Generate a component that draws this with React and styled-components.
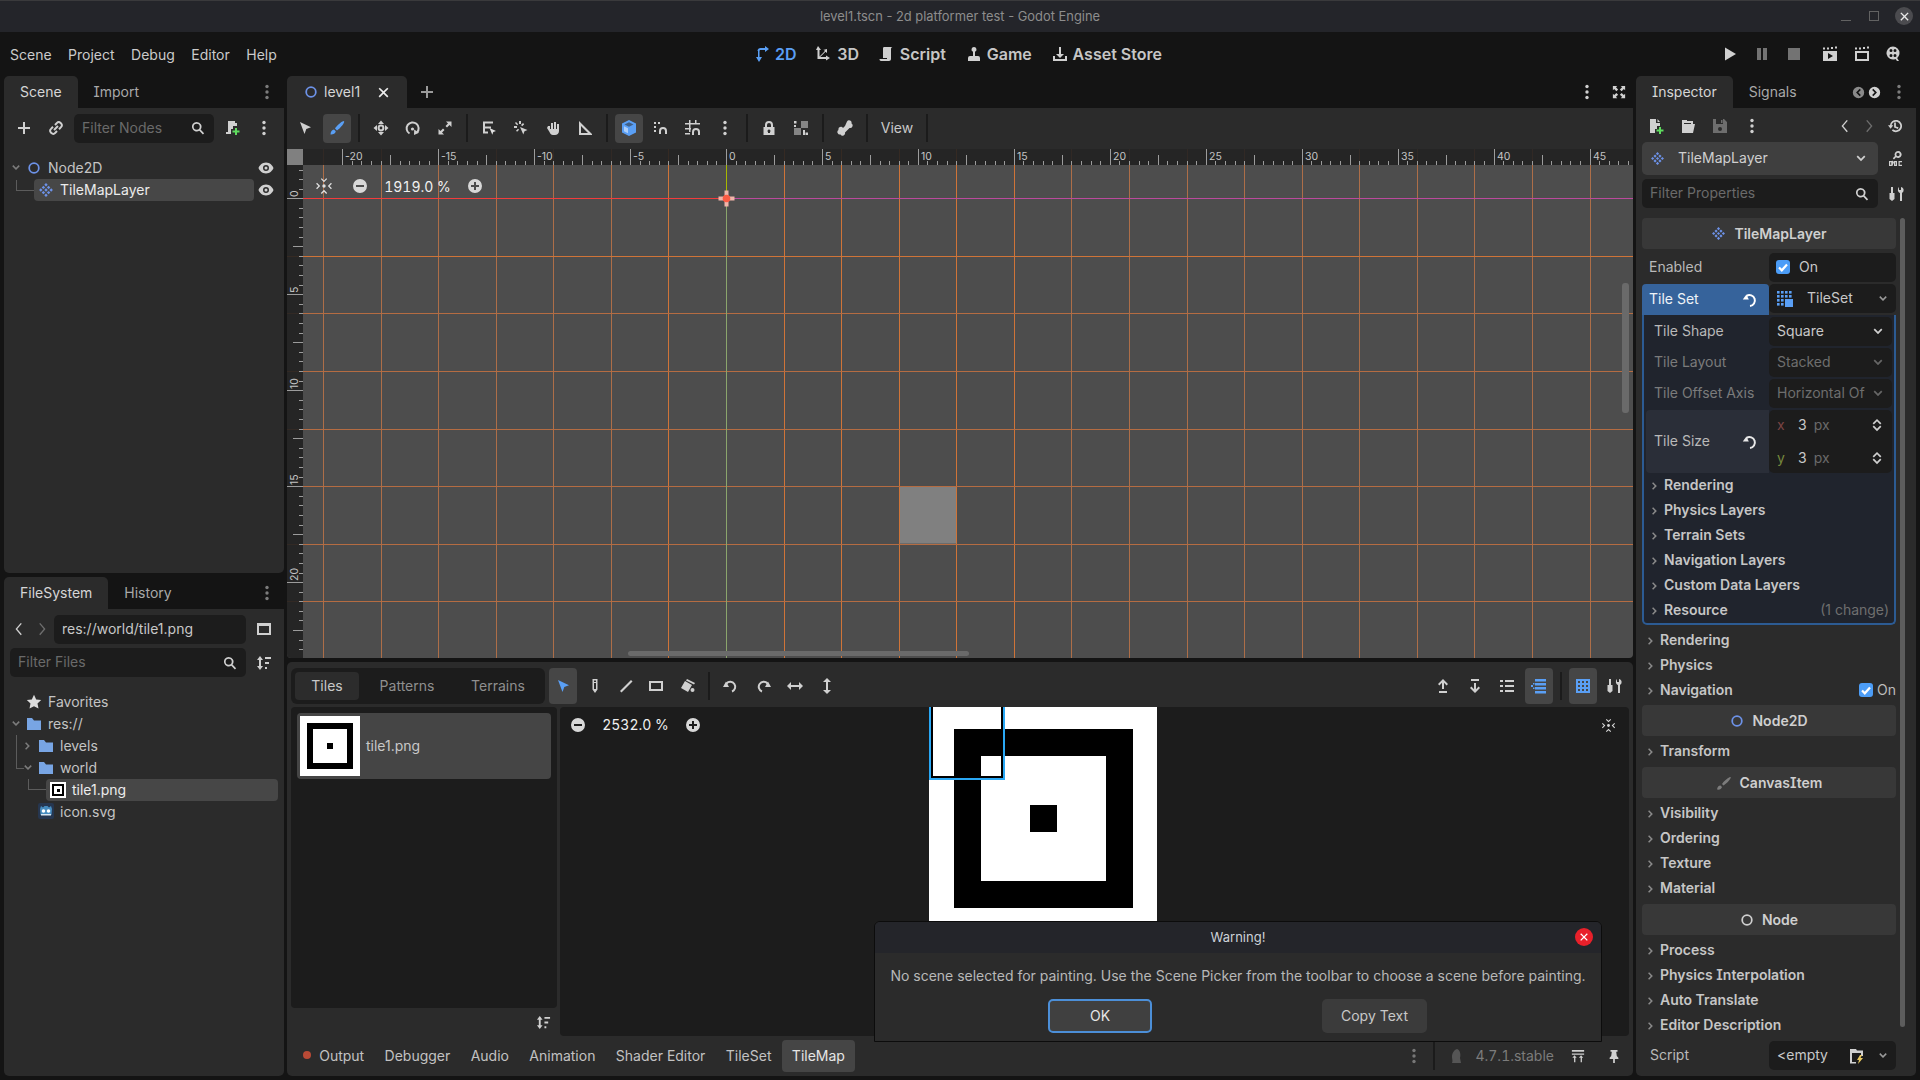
import React from 'react'
import styled, { createGlobalStyle } from 'styled-components'

const BLUE = '#5a9ff5'

const GlobalStyle = createGlobalStyle`
  html, body { margin: 0; padding: 0; background: #141414; overflow: hidden; }
  body {
    font-family: Inter, "Noto Sans", "Liberation Sans", sans-serif;
    font-size: 14px;
    font-feature-settings: "cv08", "calt";
    color: #cfcfcf;
  }
  * { box-sizing: border-box; }
`

const ring = (r = 5.5) => <circle cx="8" cy="8" r={r} fill="none" stroke="currentColor" strokeWidth="2" />

const diamond = (() => {
  const cells = []
  for (let i = -1; i <= 1; i++) {
    for (let j = -1; j <= 1; j++) {
      const x = 8 + (i - j) * 2.6
      const y = 8 + (i + j) * 2.6
      cells.push(<path key={`${i}${j}`} d={`M${x} ${y - 1.7}l1.7 1.7-1.7 1.7-1.7-1.7z`} />)
    }
  }
  return cells
})()

const ICONS = {
  plus: <path d="M7 2h2v5h5v2H9v5H7V9H2V7h5z" />,
  minusCircle: <path fillRule="evenodd" d="M8 1a7 7 0 1 1 0 14A7 7 0 0 1 8 1zM4 7v2h8V7z" />,
  plusCircle: <path fillRule="evenodd" d="M8 1a7 7 0 1 1 0 14A7 7 0 0 1 8 1zM7 4v3H4v2h3v3h2V9h3V7H9V4z" />,
  circleLeft: <path fillRule="evenodd" d="M8 1a7 7 0 1 1 0 14A7 7 0 0 1 8 1zm1.500 2.500L5 8l4.500 4.500 1.400-1.400L7.800 8l3.100-3.100z" />,
  circleRight: <path fillRule="evenodd" d="M8 1a7 7 0 1 1 0 14A7 7 0 0 1 8 1zM6.500 3.500L5.100 4.900 8.200 8l-3.100 3.100 1.400 1.400L11 8z" />,
  link: (
    <g fill="none" stroke="currentColor" strokeWidth="2">
      <path d="M7 5l2-2.2a2.3 2.3 0 0 1 3.4 0l.8.8a2.3 2.3 0 0 1 0 3.3L11 9.2" />
      <path d="M9 11l-2 2.2a2.3 2.3 0 0 1-3.4 0l-.8-.8a2.3 2.3 0 0 1 0-3.3L5 6.8" />
      <path d="M6 10l4-4" />
    </g>
  ),
  search: <path fillRule="evenodd" d="M6.5 1a5.5 5.5 0 0 1 4.4 8.8l4.1 4.1-1.4 1.4-4.1-4.1A5.5 5.5 0 1 1 6.5 1zm0 2a3.5 3.5 0 1 0 0 7 3.5 3.5 0 0 0 0-7z" />,
  dots: (
    <g>
      <circle cx="8" cy="2.5" r="1.7" />
      <circle cx="8" cy="8" r="1.7" />
      <circle cx="8" cy="13.5" r="1.7" />
    </g>
  ),
  addScript: (
    <g>
      <path d="M4 1h7v2h2v3H9v3H7v5H2v-2h2z" />
      <path fill="#5fdc5f" d="M11 8h2v2.5h2.5v2H13V15h-2v-2.5H8.5v-2H11z" />
    </g>
  ),
  arrowDown: <path d="M3 5.5l1.4-1.4L8 7.7l3.6-3.6L13 5.5l-5 5z" />,
  arrowRight: <path d="M5.5 3l5 5-5 5-1.4-1.4L7.7 8 4.1 4.4z" />,
  eye: <path fillRule="evenodd" d="M8 2.5c4 0 6.5 3 7.5 5.5-1 2.500-3.500 5.500-7.500 5.500S1.500 10.500.5 8c1-2.500 3.500-5.500 7.500-5.500zM8 5a3 3 0 1 0 0 6 3 3 0 0 0 0-6zm0 1.500a1.500 1.500 0 1 1 0 3 1.500 1.500 0 0 1 0-3z" />,
  node: <>{ring()}</>,
  tilemap: <g>{diamond}</g>,
  select: <path d="M3 2l11 5.200-4.700 1.800L7.500 14z" />,
  brush: <path d="M14.500 1c-2.500.8-6.500 4.500-8.500 7.500l2 2c3-2 6.500-6 7.300-8.700zM5 9.500c-2 .2-3.500 2-3.500 5 2.500.2 4.800-.8 5.300-3.200z" />,
  move: (
    <g>
      <path d="M8 .5L11 4H5zM8 15.500L5 12h6zM.5 8L4 5v6zM15.500 8L12 11V5z" />
      {ring(2.4)}
    </g>
  ),
  rotate: (
    <g>
      <path fill="none" stroke="currentColor" strokeWidth="2" d="M4.500 13.500A6 6 0 1 1 12 12.500" />
      <path d="M9 15l.2-5.500 4.800 3.300z" />
      <circle cx="7.500" cy="9" r="1.600" />
    </g>
  ),
  scale: <path d="M9 1.500h5.500V7l-2-2L10 7.500 8.500 6 11 3.500zM7 14.500H1.500V9l2 2L6 8.500 7.500 10 5 12.500z" />,
  listSelect: (
    <g>
      <path d="M2 1.500h10v2H4v3h6v2H4v3h3v2H2z" />
      <path fill="#e0e0e0" d="M8.500 8l6.500 3-2.700 1-1 2.800z" />
    </g>
  ),
  smartSelect: (
    <g>
      <path d="M6 1h2v3H6zM1 6h3v2H1zM3 2l2.200 2.200-1.100 1.100L2 3zM3 10.700l2-2 1.100 1.100-2 2zM10 3l1.200 1.200-2 2L8 5z" />
      <path d="M7 7l7.500 3-3 1.200-1.200 3.300z" />
    </g>
  ),
  hand: <path d="M3 6h2v3h1V3h2v6h1V2h2v7h1V4h2v7c0 2.500-2 4-4 4H8c-2 0-3-1.500-3.500-3L2 8z" />,
  ruler: <path fillRule="evenodd" d="M2 1l13 13v1H2zm2 5v7h7z" />,
  box3d: (
    <g>
      <path fill="#5a9ff5" d="M8 0l7 3.500v9L8 16l-7-3.500v-9z" />
      <path fill="#2b2b2b" d="M8 2.200L12.500 4.500 8 6.800 3.500 4.500z" opacity=".55" />
      <path fill="#ffffff" opacity=".5" d="M3 6.200l4 2v5l-4-2z" />
    </g>
  ),
  snap: (
    <g>
      <path d="M1 2h2v2H1zM5 2h2v2H5zM1 6h2v2H1zM1 10h2v2H1z" />
      <path fill="none" stroke="currentColor" strokeWidth="2" d="M7 14v-3a3 3 0 0 1 6 0v3" />
    </g>
  ),
  gridSnap: (
    <g>
      <path d="M4 0h1.500v12H4zM10 0h1.500v4H10zM0 3h15v1.500H0zM0 8h6v1.500H0zM0 13h5v1.500H0z" />
      <path fill="none" stroke="currentColor" strokeWidth="2" d="M8 15v-3a3 3 0 0 1 6 0v3" />
    </g>
  ),
  lock: <path fillRule="evenodd" d="M8 1a4 4 0 0 1 4 4v2h1.500v8h-11V7H4V5a4 4 0 0 1 4-4zm0 2a2 2 0 0 0-2 2v2h4V5a2 2 0 0 0-2-2zm0 6.500a1.500 1.500 0 0 0-1 2.600V13h2v-.9a1.500 1.500 0 0 0-1-2.600z" />,
  group: (
    <g>
      <path opacity=".55" d="M8 1h7v7H8zM1 8h7v7H1z" />
      <path d="M1 1h2.500v2.500H1zM12.500 12.500H15V15h-2.500zM1 5h2v2H1zM10 10h2v5h-2z" />
    </g>
  ),
  bone: <path d="M10 1.500a2.500 2.500 0 0 1 4.500 2 2.500 2.500 0 0 1-2 4.500L8 12.500a2.500 2.500 0 0 1-4.500 2 2.500 2.500 0 0 1-2-4.500 2.500 2.500 0 0 1 4.500-2L8 6z" />,
  fullscreen: <path d="M1 1h5L4.500 2.500 7 5 5 7 2.500 4.500 1 6zM15 1v5l-1.500-1.500L11 7 9 5l2.500-2.500L10 1zM1 15v-5l1.500 1.500L5 9l2 2-2.500 2.500L6 15zM15 15h-5l1.500-1.500L9 11l2-2 2.500 2.500L15 10z" />,
  play: <path d="M3 1.500L14 8 3 14.500z" />,
  pause: <path d="M3 2h4v12H3zM9 2h4v12H9z" />,
  stop: <rect x="2" y="2" width="12" height="12" />,
  movie: (
    <g>
      <path fillRule="evenodd" d="M1 5h14v10H1zm5 2v6l5-3z" />
      <path d="M1 1.500h2v2H1zM5 1.500h2v2H5zM9 1h2v2H9zM13 .5h2v2h-2z" />
    </g>
  ),
  movieEmpty: (
    <g>
      <path fillRule="evenodd" d="M1 5h14v10H1zm2 2v6h10V7z" />
      <path d="M1 1.500h2v2H1zM5 1.500h2v2H5zM9 1h2v2H9zM13 .5h2v2h-2z" />
    </g>
  ),
  reel: (
    <g>
      <path fillRule="evenodd" d="M7 .5a6.500 6.500 0 0 1 6.500 6.500c0 2-1 3.700-2.400 4.900l1.900 3.100H11L9.500 13A6.500 6.500 0 1 1 7 .5zM5 3a1.500 1.500 0 1 0 0 3 1.500 1.500 0 0 0 0-3zm4 0a1.500 1.500 0 1 0 0 3 1.500 1.500 0 0 0 0-3zM5 8a1.500 1.500 0 1 0 0 3 1.500 1.500 0 0 0 0-3zm4 0a1.500 1.500 0 1 0 0 3 1.500 1.500 0 0 0 0-3z" />
    </g>
  ),
  twoD: <path d="M4 5h-.5C3.500 3 5 2 6.500 2H11V0l4 3-4 3V4H6.500C6 4 5.500 4.500 5.500 5v6H8l-3 5-3-5h2z" />,
  threeD: <path fillRule="evenodd" d="M2 0l3 4H3.500v6.500l5-5V4H7l4-1v4l-1.500-1.200L4.200 11H10V9.500l4 2.500-4 2.500V13H1.500V4H0z" />,
  script: <path d="M5 1h8.500c-1 0-1.500 1-1.500 2v10c0 1-1 2-2 2H2c-1 0-1.500-1-1.500-2H8v-1H4V3c0-1 0-2 1-2z" />,
  game: <path d="M8 1a2.500 2.500 0 0 1 1 4.800V10h3a2 2 0 0 1 2 2v3H2v-3a2 2 0 0 1 2-2h3V5.800A2.500 2.500 0 0 1 8 1z" />,
  asset: <path d="M7 1h2v7h3l-4 4-4-4h3zM1 10h2v3h10v-3h2v5H1z" />,
  close: <path d="M3.400 2L8 6.600 12.600 2 14 3.400 9.400 8l4.600 4.600-1.400 1.400L8 9.400 3.400 14 2 12.600 6.600 8 2 3.400z" />,
  newFile: (
    <g>
      <path d="M2 1h6v4h4v3H9v3H7v4H2zM9.500 1l2.500 3H9.500z" />
      <path fill="#5fdc5f" d="M11 9h2v2.500h2.500v2H13V16h-2v-2.500H8.500v-2H11z" />
    </g>
  ),
  folderOpen: <path fillRule="evenodd" d="M2 2h5v1h6v3h2l-2 9H2zm2 4h7V5H4z" />,
  save: <path fillRule="evenodd" d="M1 1h11l3 3v11H1zm3 0v5h7V1zm4 8a2 2 0 1 0 0 4 2 2 0 0 0 0-4zm1-7h1.500v3H9z" />,
  back: <path fillRule="evenodd" d="M10 1l1.200 1L6 8l5.200 6-1.200 1-6-7z" />,
  forward: <path fillRule="evenodd" d="M6 1l6 7-6 7-1.200-1L10 8 4.800 2z" />,
  history: (
    <g>
      <path fill="none" stroke="currentColor" strokeWidth="2" d="M3 8a6 6 0 1 1 2 4.500" />
      <path d="M0 7h6l-3 4zM7 4h2v4.500l3 1-.6 1.800L7 9.800z" />
    </g>
  ),
  doc: (
    <g>
      <path fillRule="evenodd" d="M9 0a3.500 3.500 0 1 1-2 6.300L5 8.500 3.800 7.200 6 5.100A3.500 3.500 0 0 1 9 0zm0 1.800a1.700 1.700 0 1 0 0 3.400 1.700 1.700 0 0 0 0-3.400z" />
      <path fillRule="evenodd" d="M0 10h2.500a1.500 1.500 0 0 1 1.500 3v.5A1.500 1.500 0 0 1 2.500 15H0zm1.200 1.200v2.600h1v-2.600zM5 10h3v5H5zm1.200 1.200v2.600h.6v-2.600zM9.500 10H13v1.200h-2.300v2.600H13V15H9.500z" />
    </g>
  ),
  tools: <path d="M2 1h2v6h1.500v6L3 15l-2.500-2V7H2zM10 1v3h2V1c2 .5 3 2 2.500 4-.3 1-1 1.500-1.500 2v8h-2V7C9.500 6.500 8.500 5 9 3c.2-1 .6-1.600 1-2z" />,
  reset: (
    <g>
      <path fill="none" stroke="currentColor" strokeWidth="2" d="M4.600 3.800A5.500 5.500 0 1 1 8 14" />
      <path d="M.8 7.400h6L4.400 2.600z" />
    </g>
  ),
  tileset: (
    <g fill="#5a9ff5">
      {[1, 5, 9, 13].map(x => [1, 5, 9, 13].map(y => (
        <rect key={`${x}-${y}`} x={x - 1} y={y - 1} width={x > 5 && y > 5 ? 6 : 2.600} height={y > 5 && x > 5 ? 6 : 2.600} />
      )))}
    </g>
  ),
  updown: <path d="M8 1l5 5-1.400 1.400L8 3.800 4.400 7.400 3 6zM8 15l-5-5 1.400-1.400L8 12.200l3.600-3.600L13 10z" />,
  star: <path d="M8 .8l2.200 4.700 5 .6-3.700 3.500 1 5L8 12.200 3.500 14.600l1-5L.8 6.100l5-.6z" />,
  folder: <path d="M1 2h5l2 2.500h7V14H1z" />,
  layoutPanel: <path fillRule="evenodd" d="M1 2h14v12H1zm2 3v7h10V5z" />,
  sort: <path d="M4 1l3 4H5v6h2l-3 4-3-4h2V5H1zM9 2h6v2H9zM9 7h4v2H9zM9 12h2v2H9z" />,
  pan: (
    <g>
      <circle cx="8" cy="8" r="1.500" />
      <path d="M6 1l2 2 2-2 .8.8L8 4.600 5.200 1.800zM1 6l2 2-2 2 .8.8L4.600 8 1.800 5.200zM6 15l2-2 2 2 .8-.8L8 11.400l-2.800 2.800zM15 6l-2 2 2 2-.8.8L11.400 8l2.800-2.800z" />
    </g>
  ),
  pencil: <path fillRule="evenodd" d="M5.500 1h5v10.500L8 15l-2.500-3.500zm1.500 4v6h2V5zm0-2.500V4h2V2.500z" />,
  line: <path d="M13 2l1.500 1.500L3.500 14.500 2 13z" />,
  rect: <path fillRule="evenodd" d="M1 3h14v10H1zm2 2v6h10V5z" />,
  bucket: (
    <g>
      <path d="M6 3l7 4-4 7-7-4zM8 1l8 4-1 1.500-8-4z" />
      <circle cx="13.500" cy="12" r="2" />
    </g>
  ),
  undo: (
    <g>
      <path fill="none" stroke="currentColor" strokeWidth="2" d="M3.500 5.500A5 5 0 1 1 9 13.500" />
      <path d="M0 9h6L3 3.500z" />
    </g>
  ),
  redo: (
    <g>
      <path fill="none" stroke="currentColor" strokeWidth="2" d="M12.500 5.500A5 5 0 1 0 7 13.500" />
      <path d="M16 9h-6l3-5.500z" />
    </g>
  ),
  flipH: <path d="M0 8l4-4v3h8V4l4 4-4 4V9H4v3z" />,
  flipV: <path d="M8 0l4 4H9v8h3l-4 4-4-4h3V4H4z" />,
  moveUp: <path d="M8 1l5 5-1.400 1.400L9 4.800V11H7V4.800L4.400 7.400 3 6zM4 13h8v2H4z" />,
  moveDown: <path d="M4 1h8v2H4zM7 5h2v6.200l2.600-2.600L13 10l-5 5-5-5 1.400-1.400L7 11.200z" />,
  list: <path d="M1 2h3v2H1zM6 2h9v2H6zM1 7h3v2H1zM6 7h9v2H6zM1 12h3v2H1zM6 12h9v2H6z" />,
  listBlue: <path d="M4 1h11v2.500H4zM4 5h11v2.500H4zM4 9h11v2.500H4zM4 13h11v2.500H4zM0 7h2v2H0zM2 5h1.500v1.500H2zM2 9.500h1.500V11H2z" />,
  gridBlue: <path fillRule="evenodd" d="M1 1h14v14H1zm2 2v2h2V3zm4 0v2h2V3zm4 0v2h2V3zM3 7v2h2V7zm4 0v2h2V7zm4 0v2h2V7zM3 11v2h2v-2zm4 0v2h2v-2zm4 0v2h2v-2z" />,
  rocket: <path d="M9 1c3 1 4 5 3 9l1 5H4c1-2 0-4 0-6 0-4 2-7 5-8z" />,
  expandBottom: <path d="M1 1h14v2H1zM1 5h14v1.500H1zM4 7l2.500 3H5v5H3.500v-5H1.500zM11.500 7L14 10h-1.500v5H11v-5H9z" />,
  pin: <path d="M4 1h8v2h-1.500l.7 5 1.800 2v1.500H9V16H7v-4.500H3V10l1.800-2 .7-5H4z" />,
  brushGray: <path d="M14 2c-3 1.500-6 4-8 7l1.500 1.500c3-2 6-5 7.500-8zM4.500 10.500c-2 0-3 1.500-3.500 4 2.500.5 4.500-.5 5-2.500z" />,
  folderScript: (
    <g>
      <path fillRule="evenodd" d="M1 1h6l1 1.500h6V8h-2V5H3v9h4v1.500H1z" />
      <path fill="#e8c860" d="M11 7l-3 5h2l-1 4 5-6h-2.500l1.500-3z" />
    </g>
  ),
}

// rows that lift their text by a pixel set --lift, icons in them stay centred
const liftText = `
  padding-bottom: 2px;
  --lift: 2px;
`

const IconSvg = styled.svg`
  flex-shrink: 0;
  fill: currentColor;
  color: ${p => p.$c || '#d0d0d0'};
  display: block;
  margin-top: var(--lift, 0px);
`

const Icon = ({ n, s = 16, c }) => (
  <IconSvg viewBox="0 0 16 16" width={s} height={s} $c={c}>{ICONS[n]}</IconSvg>
)

const CheckMark = () => (
  <svg viewBox="0 0 14 14" width="14" height="14">
    <path fill="none" stroke="#fff" strokeWidth="2.200" d="M3 7.500l2.800 2.800L11 4.500" />
  </svg>
)

const GodotLogo = () => (
  <svg viewBox="0 0 16 16" width="16" height="16">
    <rect width="16" height="16" rx="2" fill="#26364f" />
    <path fill="#478cbf" d="M3 3l2 1.500L6.500 3h3L11 4.500 13 3l1 3-.5 6h-11L2 6z" />
    <circle cx="5.500" cy="8" r="1.800" fill="#fff" />
    <circle cx="10.500" cy="8" r="1.800" fill="#fff" />
    <path fill="#d8e6f3" d="M3 11h10v1.500H3z" />
  </svg>
)

const Page = styled.div`
  position: relative;
  width: 1920px;
  height: 1080px;
  display: flex;
  flex-direction: column;
  overflow: hidden;
  background: #141414;
`

const TitleBar = styled.div`
  height: 32px;
  flex-shrink: 0;
  background: #24252a;
  border-top: 1px solid #3a3a3c;
  display: flex;
  align-items: center;
  justify-content: center;
  position: relative;
  font-size: 12.900px;
  color: #8d8d8d;
`

const WindowBtns = styled.div`
  position: absolute;
  right: 7px;
  top: 6px;
  display: flex;
  align-items: center;
`

const WinMin = styled.div`
  width: 10px;
  height: 1px;
  background: #626262;
  margin-top: 9px;
`

const WinMax = styled.div`
  width: 10px;
  height: 10px;
  margin: 0 16px 0 18px;
  border: 1px solid #626262;
`

const WinClose = styled.div`
  width: 18px;
  height: 18px;
  border-radius: 50%;
  background: #4b4b4f;
  display: flex;
  align-items: center;
  justify-content: center;
`

const MenuBar = styled.div`
  height: 44px;
  flex-shrink: 0;
  display: flex;
  align-items: center;
`

const MenuList = styled.div`
  width: 754px;
  padding-left: 10px;
  display: flex;
  gap: 16.500px;
  color: #cbcbcb;
`

const MainButtons = styled.div`
  display: flex;
  gap: 19.800px;
`

const MainBtn = styled.div`
  display: flex;
  align-items: center;
  gap: 5px;
  font-size: 16px;
  font-weight: 600;
  color: ${p => (p.$active ? BLUE : '#c6c6c6')};
`

const PlayBtns = styled.div`
  margin-left: auto;
  padding-right: 18px;
  display: flex;
  align-items: center;
  gap: 16px;
`

const MovieBtn = styled.div`
  margin-left: ${p => p.$ml || 0}px;
`

const Spacer = styled.div`
  width: ${p => p.$w}px;
  flex-shrink: 0;
`

const Main = styled.div`
  flex: 1;
  min-height: 0;
  display: grid;
  grid-template-columns: 280px 1346px 280px;
  column-gap: 3px;
  padding: 0 4px 4px;
`

const Column = styled.div`
  display: flex;
  flex-direction: column;
  gap: 4px;
  min-height: 0;
`

const Dock = styled.div`
  display: flex;
  flex-direction: column;
  height: ${p => (p.$h ? `${p.$h}px` : 'auto')};
  flex: ${p => (p.$h ? 'none' : 1)};
  min-height: 0;
`

const Tabs = styled.div`
  height: 32px;
  flex-shrink: 0;
  display: flex;
  align-items: stretch;
`

const Tab = styled.div`
  ${liftText}
  padding-left: ${p => p.$pl || 16}px;
  padding-right: ${p => p.$pr || 16}px;
  display: flex;
  align-items: center;
  gap: 6px;
  border-radius: 5px 5px 0 0;
  background: ${p => (p.$active ? '#2b2b2b' : 'transparent')};
  color: ${p => (p.$active ? '#d6d6d6' : '#a9a9a9')};
`

const TabClose = styled.span`
  margin-left: 11px;
`

const TabsEnd = styled.div`
  margin-left: auto;
  margin-right: ${p => p.$mr || 0}px;
  display: flex;
  align-items: center;
  padding-right: ${p => p.$pr || 0}px;
  color: #8a8a8a;
`

const DockBody = styled.div`
  flex: 1;
  min-height: 0;
  background: #2b2b2b;
  border-radius: 0 0 5px 5px;
  display: flex;
  flex-direction: column;
  position: relative;
`

const ToolRow = styled.div`
  display: flex;
  align-items: center;
  gap: 4px;
  flex-shrink: 0;
  height: ${p => p.$h}px;
  padding: ${p => p.$pad || '0'};
`

const Grow = styled.div`
  flex: 1;
`

const IconBtn = styled.div`
  --lift: 0px;
  width: ${p => p.$w || 28}px;
  height: ${p => p.$h || 29}px;
  flex-shrink: 0;
  display: flex;
  align-items: center;
  justify-content: center;
  border-radius: 4px;
  background: ${p => (p.$on ? '#464646' : 'transparent')};
`

const ViewBtn = styled(IconBtn)`
  ${liftText}
  color: #c8c8c8;
`

const VSep = styled.div`
  width: 8px;
  height: 28px;
  flex-shrink: 0;
  display: flex;
  justify-content: center;
  &::before {
    content: '';
    width: 2px;
    background: #1b1b1b;
  }
`

const FilterBox = styled.div`
  ${liftText}
  height: 29px;
  width: ${p => p.$w}px;
  flex-shrink: 0;
  background: #1c1c1c;
  border-radius: 5px;
  display: flex;
  align-items: center;
  justify-content: space-between;
  padding-left: 8px;
  padding-right: 9px;
  color: ${p => (p.$value ? '#c8c8c8' : '#6a6a6a')};
`

const Tree = styled.div`
  padding-top: ${p => p.$top}px;
  display: flex;
  flex-direction: column;
`

const TreeRow = styled.div`
  ${liftText}
  height: 22px;
  flex-shrink: 0;
  display: flex;
  align-items: center;
  position: relative;
  padding-left: ${p => p.$indent}px;
  color: ${p => (p.$sel ? '#ececec' : '#c4c4c4')};
  gap: 6px;
  ${p => p.$sel && `
    margin-left: ${p.$indent - 4}px;
    margin-right: ${p.$right}px;
    padding-left: 4px;
    background: #474747;
    border-radius: 4px;
  `}
`

const TreeName = styled.span`
  margin-left: ${p => p.$ml || 0}px;
`

const TreeThumb = styled.div`
  margin-top: var(--lift, 0px);
`

const TreeLine = styled.div`
  position: absolute;
  left: ${p => p.$x}px;
  top: ${p => p.$y}px;
  width: ${p => p.$w}px;
  height: ${p => p.$h}px;
  border-left: 1px solid #5c5c5c;
  border-bottom: 1px solid #5c5c5c;
`

const TreeArrow = styled.div`
  --lift: 0px;
  position: absolute;
  left: ${p => p.$x}px;
  top: 5px;
  color: #7c7c7c;
`

const Eye = styled.div`
  position: absolute;
  left: 254px;
  top: ${p => p.$y}px;
`

const Viewport = styled.div`
  position: relative;
  flex: 1;
  min-height: 0;
  overflow: hidden;
  border-radius: 0 0 4px 4px;
`

const ZoomBar = styled.div`
  position: absolute;
  left: ${p => p.$x}px;
  top: ${p => p.$y}px;
  display: flex;
  align-items: center;
  color: #f0f0f0;
  font-feature-settings: "cv08", "tnum";
`

const ZoomValue = styled.div`
  width: 99px;
  text-align: center;
`

const ScrollBar = styled.div`
  position: absolute;
  background: #6a6a6a;
  border-radius: 3px;
  left: ${p => p.$x}px;
  top: ${p => p.$y}px;
  width: ${p => p.$w}px;
  height: ${p => p.$h}px;
`

const BottomPanel = styled.div`
  flex: 1;
  min-height: 0;
  background: #2b2b2b;
  border-radius: 5px;
  display: flex;
  flex-direction: column;
  padding: 6px 4px 4px;
`

const SubTabs = styled.div`
  width: 254px;
  height: 36px;
  flex-shrink: 0;
  background: #1c1c1c;
  border-radius: 6px;
  padding: 4px;
  display: flex;
`

const SubTab = styled.div`
  ${liftText}
  width: ${p => p.$w}px;
  border-radius: 4px;
  display: flex;
  align-items: center;
  justify-content: center;
  background: ${p => (p.$on ? '#2c2c2c' : 'transparent')};
  color: ${p => (p.$on ? '#c8c8c8' : '#8f8f8f')};
`

const TileWork = styled.div`
  display: flex;
  gap: 3px;
  height: 329px;
  margin-top: 3px;
  flex-shrink: 0;
`

const TileCol = styled.div`
  width: 266px;
  display: flex;
  flex-direction: column;
`

const TileList = styled.div`
  flex: 1;
  background: #1c1c1c;
  border-radius: 4px;
  padding: 6px;
`

const TileItem = styled.div`
  height: 66px;
  background: #454545;
  border-radius: 4px;
  padding-left: 3px;
  display: flex;
  align-items: center;
  gap: 6px;
`

const TileName = styled.span`
  margin-bottom: 2px;
  color: #c8c8c8;
`

const SortRow = styled.div`
  height: 28px;
  display: flex;
  justify-content: flex-end;
  align-items: center;
  padding-right: 6px;
`

const Sq = styled.div`
  width: ${p => p.$s}px;
  height: ${p => p.$s}px;
  flex-shrink: 0;
  background: ${p => p.$c};
  display: flex;
  align-items: center;
  justify-content: center;
`

const TileCanvas = styled.div`
  position: relative;
  flex: 1;
  background: #1c1c1c;
  border-radius: 4px;
  overflow: hidden;
`

const AtlasPos = styled.div`
  position: absolute;
  left: 369px;
  top: -3px;
`

const AtlasSel = styled.div`
  position: absolute;
  left: 369px;
  top: -4px;
  width: 76px;
  height: 77px;
  border: 2px solid #2aa8f5;
  box-shadow: inset 0 0 0 2px #000;
`

const CanvasPan = styled.div`
  position: absolute;
  right: 13px;
  top: 11px;
`

const BottomTabs = styled.div`
  height: 32px;
  margin-top: 4px;
  display: flex;
  align-items: stretch;
  padding-left: 2px;
`

const BottomTab = styled.div`
  ${liftText}
  padding-left: 10.200px;
  padding-right: 10.200px;
  display: flex;
  align-items: center;
  gap: 8px;
  border-radius: 4px;
  background: ${p => (p.$on ? '#454545' : 'transparent')};
  color: ${p => (p.$on ? '#e6e6e6' : '#c2c2c2')};
`

const Dot = styled.div`
  width: 8px;
  height: 8px;
  border-radius: 50%;
  background: #b94a36;
`

const BottomEnd = styled.div`
  margin-left: auto;
  display: flex;
  align-items: center;
  padding-right: 8px;
  color: #7c7c7c;
`

const Version = styled.span`
  ${liftText}
  margin: 0 17px 0 11px;
  font-feature-settings: "cv08", "tnum";
`

const InspectorBody = styled.div`
  flex: 1;
  min-height: 0;
  padding: 0 20px 0 6px;
  display: flex;
  flex-direction: column;
`

const HistoryRow = styled.div`
  height: 34px;
  padding-top: 2px;
  display: flex;
  align-items: center;
  margin-right: -13px;
`

const SelectorRow = styled.div`
  display: flex;
  align-items: center;
  margin-right: -20px;
  margin-bottom: ${p => p.$mb || 0}px;
`

const Selector = styled.div`
  ${liftText}
  width: 236px;
  height: 33px;
  background: #3f3f3f;
  border-radius: 5px;
  display: flex;
  align-items: center;
  padding-left: 8px;
  padding-right: 10px;
  gap: 13px;
  color: #cfcfcf;
`

const SelectorName = styled.span`
  flex: 1;
`

const FilterProps = styled(FilterBox)`
  width: 236px;
`

const SideIcon = styled.div`
  width: 38px;
  display: flex;
  justify-content: center;
`

const SectionHead = styled.div`
  height: 31px;
  flex-shrink: 0;
  margin: ${p => p.$m || '3px 0 3px'};
  background: #383838;
  border-radius: 4px;
  display: flex;
  align-items: center;
  justify-content: center;
  gap: 8px;
  font-weight: 600;
  color: #cfcfcf;
`

const PropRow = styled.div`
  height: ${p => p.$h || 29}px;
  flex-shrink: 0;
  display: grid;
  grid-template-columns: ${p => p.$col || 127}px 1fr;
  margin-top: ${p => p.$mt || 0}px;
`

const PropLabel = styled.div`
  ${liftText}
  display: flex;
  align-items: center;
  justify-content: space-between;
  padding-left: ${p => p.$pl || 7}px;
  padding-right: 11px;
  color: ${p => (p.$dim ? '#7b7b7b' : p.$sel ? '#eef3f8' : '#b9b9b9')};
  background: ${p => (p.$sel ? '#36639b' : p.$hl ? '#2a2e38' : 'transparent')};
  border-radius: ${p => (p.$sel ? '4px 4px 0 0' : p.$hl ? '4px 0 0 4px' : 0)};
`

const ValueBox = styled.div`
  ${liftText}
  background: #1c1c1c;
  border-radius: 5px;
  display: flex;
  align-items: center;
  justify-content: space-between;
  padding-left: ${p => p.$pl || 8}px;
  padding-right: 7px;
  height: 29px;
  color: ${p => (p.$dim ? '#6e6e6e' : '#c8c8c8')};
  white-space: nowrap;
  overflow: hidden;
`

const BoxLeft = styled.div`
  display: flex;
  align-items: center;
  gap: ${p => p.$gap || 12}px;
`

const Check = styled.div`
  --lift: 0px;
  width: 14px;
  height: 14px;
  border-radius: 3px;
  background: #4c9df7;
  display: flex;
  align-items: center;
  justify-content: center;
`

const Nested = styled.div`
  background: #20242d;
  border: 2px solid #2c5b93;
  border-top: 0;
  border-radius: 0 0 5px 5px;
  padding: 2px 2px 0 2px;
  height: 310px;
  flex-shrink: 0;
  display: flex;
  flex-direction: column;
  gap: 2px;
`

const VecBox = styled.div`
  background: #1c1c1c;
  border-radius: 5px;
  display: flex;
  flex-direction: column;
  gap: 3px;
`

const VecLine = styled.div`
  ${liftText}
  height: 30px;
  flex-shrink: 0;
  display: flex;
  align-items: center;
  padding-left: 8px;
  padding-right: 8px;
  color: #c8c8c8;
`

const Axis = styled.span`
  width: 21px;
  color: ${p => p.$c};
`

const Unit = styled.span`
  margin-left: 7px;
  color: #6a6a6a;
  margin-right: auto;
`

const SectionRows = styled.div`
  display: flex;
  flex-direction: column;
  flex-shrink: 0;
  margin-top: ${p => p.$mt || 0}px;
`

const Section = styled.div`
  ${liftText}
  height: 25px;
  flex-shrink: 0;
  display: flex;
  align-items: center;
  font-weight: 600;
  color: #c6c6c6;
  padding-left: 3px;
  gap: 3px;
`

const SectionNote = styled.span`
  margin-left: auto;
  font-weight: 400;
  color: #6f6f6f;
  padding-right: 3px;
`

const InlineOn = styled.span`
  margin-left: auto;
  display: flex;
  align-items: center;
  gap: 4px;
  font-weight: 400;
  color: #bcbcbc;
`

const ScriptRow = styled(PropRow)`
  margin-top: 3px;
`

const InspectorScroll = styled.div`
  position: absolute;
  left: 264px;
  top: 110px;
  width: 5px;
  height: 809px;
  background: #5d5d5d;
  border-radius: 3px;
`

const Dialog = styled.div`
  position: absolute;
  left: 874px;
  top: 921px;
  width: 728px;
  height: 121px;
  border: 1px solid #0c0c0c;
  border-radius: 6px 6px 0 0;
  background: #2b2b2b;
  display: flex;
  flex-direction: column;
  overflow: hidden;
`

const DialogTitle = styled.div`
  height: 31px;
  padding-bottom: 2px;
  background: #24252a;
  display: flex;
  align-items: center;
  justify-content: center;
  font-size: 13px;
  color: #cdd2d8;
  position: relative;
  flex-shrink: 0;
`

const DialogClose = styled.div`
  position: absolute;
  right: 8px;
  top: 6px;
  width: 18px;
  height: 18px;
  border-radius: 50%;
  background: #e8202a;
  display: flex;
  align-items: center;
  justify-content: center;
`

const DialogText = styled.div`
  text-align: center;
  height: 46px;
  line-height: 46px;
  color: #b8b8b8;
`

const DialogBtns = styled.div`
  display: flex;
  padding-left: 173px;
  gap: 170px;
`

const DialogBtn = styled.div`
  ${liftText}
  width: ${p => p.$w}px;
  height: 34px;
  border-radius: 5px;
  background: ${p => (p.$focus ? '#404040' : '#3b3b3b')};
  border: ${p => (p.$focus ? '2px solid #4c8fd8' : 'none')};
  color: ${p => (p.$focus ? '#e6e6e6' : '#c8c8c8')};
  display: flex;
  align-items: center;
  justify-content: center;
`

const TileTexture = ({ s, r, i, d }) => (
  <Sq $s={s} $c="#fff">
    <Sq $s={r} $c="#000">
      <Sq $s={i} $c="#fff">
        <Sq $s={d} $c="#000" />
      </Sq>
    </Sq>
  </Sq>
)

// ruler and grid of the 2d view, x/y are relative to the top-left of the drawing
const VIEW_W = 1346
const VIEW_H = 509
const RULER = 16
const OX = 439
const OY = 49.3
const CELL = 57.57
const MAJOR = 95.95

const ViewDrawing = () => {
  const grid = []
  for (let k = -8; k <= 16; k++) {
    if (k === 0) continue
    const x = Math.round(OX + k * CELL) + 0.5
    const bright = k >= -1 && k <= 5
    grid.push(<line key={`v${k}`} x1={x} x2={x} y1={0} y2={VIEW_H} stroke={bright ? '#cf7438' : '#ad6e48'} />)
  }
  for (let j = 1; j <= 8; j++) {
    const y = Math.round(OY + j * CELL) + 0.5
    grid.push(<line key={`h${j}`} x1={0} x2={VIEW_W} y1={y} y2={y} stroke={j === 1 ? '#cf7438' : '#b56c42'} />)
  }
  const ticks = []
  for (let n = -40; n <= 100; n++) {
    const x = Math.round(OX + (n * MAJOR) / 10) + 0.5
    if (x > RULER && x < VIEW_W - 1) {
      const len = n % 10 === 0 ? 16 : n % 5 === 0 ? 10 : 4
      ticks.push(<line key={`t${n}`} x1={x} x2={x} y1={RULER - len} y2={RULER} stroke="#9c9c9c" />)
    }
    const y = Math.round(OY + (n * MAJOR) / 10) + 0.5
    if (y > RULER && y < VIEW_H) {
      const len = n % 10 === 0 ? 16 : n % 5 === 0 ? 10 : 4
      ticks.push(<line key={`u${n}`} y1={y} y2={y} x1={RULER - len} x2={RULER} stroke="#9c9c9c" />)
    }
  }
  const labels = []
  for (let v = -20; v <= 45; v += 5) {
    labels.push(
      <text key={`l${v}`} x={Math.round(OX + (v / 5) * MAJOR) + 3} y={11} fontSize="10.500" fill="#c4c4c4">
        {v < 0 ? `-${-v}` : v}
      </text>
    )
  }
  for (let v = 0; v <= 20; v += 5) {
    const y = Math.round(OY + (v / 5) * MAJOR) - 1
    labels.push(
      <text key={`m${v}`} transform={`translate(11 ${y}) rotate(-90)`} fontSize="10.500" fill="#c4c4c4">{v}</text>
    )
  }
  const ox = Math.round(OX) + 0.5
  const oy = Math.round(OY) + 0.5
  return (
    <svg width={VIEW_W} height={VIEW_H} viewBox={`0 0 ${VIEW_W} ${VIEW_H}`} style={{ display: 'block', fontFamily: 'Inter' }}>
      <rect width={VIEW_W} height={VIEW_H} fill="#4d4d4d" />
      <rect x={612} y={337} width={57.600} height={57.600} fill="#808080" />
      {grid}
      <line x1={ox} x2={ox} y1={0} y2={oy} stroke="#a7b800" />
      <line x1={ox} x2={ox} y1={oy} y2={VIEW_H} stroke="#8ba56c" />
      <line x1={0} x2={ox} y1={oy} y2={oy} stroke="#f23c3c" />
      <line x1={ox} x2={VIEW_W} y1={oy} y2={oy} stroke="#bb4a9d" />
      <rect width={VIEW_W} height={RULER} fill="#202020" fillOpacity=".88" />
      <rect y={RULER} width={RULER} height={VIEW_H - RULER} fill="#202020" fillOpacity=".88" />
      <rect width={RULER} height={RULER} fill="#808080" />
      {ticks}
      {labels}
      <g transform={`translate(${ox} ${oy})`}>
        <rect x="-2" y="-8" width="4" height="16" fill="#f1b4aa" />
        <rect x="-8" y="-2" width="16" height="4" fill="#f1b4aa" />
        <circle r="3.800" fill="#fb5b44" />
      </g>
    </svg>
  )
}

const TOP_TOOLS = [
  ['select'], ['brush', BLUE, true], '|', ['move'], ['rotate'], ['scale'], '|',
  ['listSelect'], ['smartSelect'], ['hand'], ['ruler'], '|', ['box3d', undefined, true],
  ['snap'], ['gridSnap'], ['dots'], '|', ['lock'], ['group'], '|', ['bone'], '|', 'View', '|',
]

const PAINT_TOOLS = [
  ['select', BLUE, true, 28], ['pencil', undefined, false, 28], ['line', undefined, false, 26],
  ['rect', undefined, false, 26], ['bucket', undefined, false, 28], '|', ['undo'], ['redo'], ['flipH'], ['flipV'],
]

const ToolButtons = ({ items, h }) => items.map((t, i) => {
  if (t === '|') return <VSep key={i} />
  if (t === 'View') return <ViewBtn key={i} $w={44} $h={h}>View</ViewBtn>
  const [n, c, on, w] = t
  return <IconBtn key={i} $on={on} $w={w} $h={h}><Icon n={n} c={c} /></IconBtn>
})

const Arrowed = ({ children }) => (
  <Section><Icon n="arrowRight" s={12} c="#8a8a8a" />{children}</Section>
)

const App = () => (
  <Page>
    <GlobalStyle />
    <TitleBar>
      level1.tscn - 2d platformer test - Godot Engine
      <WindowBtns>
        <WinMin />
        <WinMax />
        <WinClose><Icon n="close" s={11} c="#e8e8e8" /></WinClose>
      </WindowBtns>
    </TitleBar>

    <MenuBar>
      <MenuList>
        <span>Scene</span><span>Project</span><span>Debug</span><span>Editor</span><span>Help</span>
      </MenuList>
      <MainButtons>
        <MainBtn $active><Icon n="twoD" c={BLUE} />2D</MainBtn>
        <MainBtn><Icon n="threeD" />3D</MainBtn>
        <MainBtn><Icon n="script" />Script</MainBtn>
        <MainBtn><Icon n="game" />Game</MainBtn>
        <MainBtn><Icon n="asset" />Asset Store</MainBtn>
      </MainButtons>
      <PlayBtns>
        <Icon n="play" />
        <Icon n="pause" c="#737373" />
        <Icon n="stop" c="#737373" />
        <MovieBtn $ml={4}><Icon n="movie" /></MovieBtn>
        <Icon n="movieEmpty" />
        <Icon n="reel" />
      </PlayBtns>
    </MenuBar>

    <Main>
      <Column>
        <Dock $h={497}>
          <Tabs>
            <Tab $active>Scene</Tab>
            <Tab>Import</Tab>
            <TabsEnd $pr={9}><Icon n="dots" c="#7c7c7c" /></TabsEnd>
          </Tabs>
          <DockBody>
            <ToolRow $h={41} $pad="5px 0 6px 6px">
              <IconBtn><Icon n="plus" /></IconBtn>
              <IconBtn><Icon n="link" /></IconBtn>
              <FilterBox $w={140}>Filter Nodes<Icon n="search" s={14} /></FilterBox>
              <IconBtn><Icon n="addScript" /></IconBtn>
              <IconBtn><Icon n="dots" /></IconBtn>
            </ToolRow>
            <Tree $top={8}>
              <TreeRow $indent={23}>
                <TreeArrow $x={6}><Icon n="arrowDown" s={12} c="#7c7c7c" /></TreeArrow>
                <Icon n="node" s={14} c="#6d92e8" />
                <TreeName $ml={1}>Node2D</TreeName>
              </TreeRow>
              <TreeRow $indent={34} $sel $right={30}>
                <TreeLine $x={-18} $y={1} $w={18} $h={11} />
                <Icon n="tilemap" s={16} c="#6d92e8" />
                <span>TileMapLayer</span>
              </TreeRow>
            </Tree>
            <Eye $y={52}><Icon n="eye" s={16} /></Eye>
            <Eye $y={74}><Icon n="eye" s={16} /></Eye>
          </DockBody>
        </Dock>
        <Dock>
          <Tabs>
            <Tab $active>FileSystem</Tab>
            <Tab>History</Tab>
            <TabsEnd $pr={9}><Icon n="dots" c="#7c7c7c" /></TabsEnd>
          </Tabs>
          <DockBody>
            <ToolRow $h={39} $pad="4px 0 3px 4px">
              <IconBtn $w={22}><Icon n="back" s={14} /></IconBtn>
              <IconBtn $w={16}><Icon n="forward" s={14} c="#6e6e6e" /></IconBtn>
              <FilterBox $w={192} $value>res://world/tile1.png</FilterBox>
              <IconBtn $w={28}><Icon n="layoutPanel" /></IconBtn>
            </ToolRow>
            <ToolRow $h={29} $pad="0 0 0 6px">
              <FilterBox $w={236}>Filter Files<Icon n="search" s={14} /></FilterBox>
              <IconBtn $w={28}><Icon n="sort" /></IconBtn>
            </ToolRow>
            <Tree $top={14}>
              <TreeRow $indent={22}>
                <Icon n="star" s={16} c="#dcdcdc" />
                <span>Favorites</span>
              </TreeRow>
              <TreeRow $indent={22}>
                <TreeArrow $x={6}><Icon n="arrowDown" s={12} c="#7c7c7c" /></TreeArrow>
                <Icon n="folder" c="#78a5e4" />
                <span>res://</span>
              </TreeRow>
              <TreeRow $indent={34}>
                <TreeArrow $x={18}><Icon n="arrowRight" s={12} c="#7c7c7c" /></TreeArrow>
                <Icon n="folder" c="#78a5e4" />
                <span>levels</span>
              </TreeRow>
              <TreeRow $indent={34}>
                <TreeLine $x={12} $y={-22} $w={8} $h={34} />
                <TreeArrow $x={18}><Icon n="arrowDown" s={12} c="#7c7c7c" /></TreeArrow>
                <Icon n="folder" c="#78a5e4" />
                <span>world</span>
              </TreeRow>
              <TreeRow $indent={46} $sel $right={6}>
                <TreeLine $x={-18} $y={0} $w={18} $h={11} />
                <TreeThumb>
                  <Sq $s={16} $c="#fff"><Sq $s={12} $c="#000"><Sq $s={8} $c="#fff"><Sq $s={3} $c="#000" /></Sq></Sq></Sq>
                </TreeThumb>
                <span>tile1.png</span>
              </TreeRow>
              <TreeRow $indent={34}>
                <TreeThumb><GodotLogo /></TreeThumb>
                <span>icon.svg</span>
              </TreeRow>
            </Tree>
          </DockBody>
        </Dock>
      </Column>

      <Column>
        <Dock $h={582}>
          <Tabs>
            <Tab $active $pl={17} $pr={17}>
              <Icon n="node" s={14} c="#6d92e8" />
              level1
              <TabClose><Icon n="close" s={13} c="#ececec" /></TabClose>
            </Tab>
            <IconBtn $w={40} $h={32}><Icon n="plus" c="#9a9a9a" /></IconBtn>
            <TabsEnd $mr={-2}>
              <IconBtn $w={32} $h={32}><Icon n="dots" /></IconBtn>
              <IconBtn $w={32} $h={32}><Icon n="fullscreen" s={14} /></IconBtn>
            </TabsEnd>
          </Tabs>
          <DockBody>
            <ToolRow $h={41} $pad="5px 0 6px 4px">
              <ToolButtons items={TOP_TOOLS} h={29} />
            </ToolRow>
            <Viewport>
              <ViewDrawing />
              <ZoomBar $x={28} $y={28}>
                <Icon n="pan" s={18} c="#e0e0e0" />
                <Spacer $w={19} />
                <Icon n="minusCircle" s={16} c="#d8d8d8" />
                <ZoomValue>1919.0 %</ZoomValue>
                <Icon n="plusCircle" s={16} c="#d8d8d8" />
              </ZoomBar>
              <ScrollBar $x={341} $y={502} $w={341} $h={5} />
              <ScrollBar $x={1335} $y={134} $w={7} $h={130} />
            </Viewport>
          </DockBody>
        </Dock>
        <BottomPanel>
          <ToolRow $h={36}>
            <SubTabs>
              <SubTab $on $w={64}>Tiles</SubTab>
              <SubTab $w={96}>Patterns</SubTab>
              <SubTab $w={86}>Terrains</SubTab>
            </SubTabs>
            <ToolButtons items={PAINT_TOOLS} h={36} />
            <Grow />
            <IconBtn $h={36}><Icon n="moveUp" /></IconBtn>
            <IconBtn $h={36}><Icon n="moveDown" /></IconBtn>
            <IconBtn $h={36}><Icon n="list" /></IconBtn>
            <IconBtn $h={36} $on><Icon n="listBlue" c={BLUE} /></IconBtn>
            <VSep />
            <IconBtn $h={36} $on><Icon n="gridBlue" c={BLUE} /></IconBtn>
            <IconBtn $h={36}><Icon n="tools" /></IconBtn>
          </ToolRow>
          <TileWork>
            <TileCol>
              <TileList>
                <TileItem>
                  <TileTexture s={60} r={46} i={34} d={6} />
                  <TileName>tile1.png</TileName>
                </TileItem>
              </TileList>
              <SortRow><Icon n="sort" s={15} /></SortRow>
            </TileCol>
            <TileCanvas>
              <AtlasPos><TileTexture s={228} r={179} i={125} d={27} /></AtlasPos>
              <AtlasSel />
              <ZoomBar $x={10} $y={9}>
                <Icon n="minusCircle" s={16} c="#d8d8d8" />
                <ZoomValue>2532.0 %</ZoomValue>
                <Icon n="plusCircle" s={16} c="#d8d8d8" />
              </ZoomBar>
              <CanvasPan><Icon n="pan" s={15} c="#d8d8d8" /></CanvasPan>
            </TileCanvas>
          </TileWork>
          <BottomTabs>
            <BottomTab><Dot />Output</BottomTab>
            <BottomTab>Debugger</BottomTab>
            <BottomTab>Audio</BottomTab>
            <BottomTab>Animation</BottomTab>
            <BottomTab>Shader Editor</BottomTab>
            <BottomTab>TileSet</BottomTab>
            <BottomTab $on>TileMap</BottomTab>
            <BottomEnd>
              <Icon n="dots" c="#777" />
              <Spacer $w={8} />
              <VSep />
              <Spacer $w={10} />
              <Icon n="rocket" c="#555" />
              <Version>4.7.1.stable</Version>
              <Icon n="expandBottom" s={14} />
              <Spacer $w={22} />
              <Icon n="pin" s={14} />
            </BottomEnd>
          </BottomTabs>
        </BottomPanel>
      </Column>

      <Column>
        <Dock>
          <Tabs>
            <Tab $active>Inspector</Tab>
            <Tab>Signals</Tab>
            <TabsEnd $pr={9}>
              <Icon n="circleLeft" s={13} c="#8a8a8a" />
              <Spacer $w={3} />
              <Icon n="circleRight" s={13} c="#d0d0d0" />
              <Spacer $w={10} />
              <Icon n="dots" c="#7c7c7c" />
            </TabsEnd>
          </Tabs>
          <DockBody>
            <InspectorBody>
              <HistoryRow>
                <IconBtn $w={28} $h={32}><Icon n="newFile" /></IconBtn>
                <Spacer $w={4} />
                <IconBtn $w={28} $h={32}><Icon n="folderOpen" /></IconBtn>
                <Spacer $w={4} />
                <IconBtn $w={28} $h={32}><Icon n="save" c="#6e6e6e" /></IconBtn>
                <Spacer $w={4} />
                <IconBtn $w={28} $h={32}><Icon n="dots" /></IconBtn>
                <Grow />
                <IconBtn $w={24} $h={32}><Icon n="back" s={14} /></IconBtn>
                <IconBtn $w={24} $h={32}><Icon n="forward" s={14} c="#6e6e6e" /></IconBtn>
                <IconBtn $w={28} $h={32}><Icon n="history" s={14} /></IconBtn>
              </HistoryRow>
              <SelectorRow $mb={4}>
                <Selector>
                  <Icon n="tilemap" s={15} c="#6d92e8" />
                  <SelectorName>TileMapLayer</SelectorName>
                  <Icon n="arrowDown" s={14} />
                </Selector>
                <SideIcon><Icon n="doc" /></SideIcon>
              </SelectorRow>
              <SelectorRow $mb={7}>
                <FilterProps>Filter Properties<Icon n="search" s={14} /></FilterProps>
                <SideIcon><Icon n="tools" /></SideIcon>
              </SelectorRow>
              <SectionHead $m="3px 0 4px"><Icon n="tilemap" s={15} c="#6d92e8" />TileMapLayer</SectionHead>
              <PropRow>
                <PropLabel>Enabled</PropLabel>
                <ValueBox $pl={7}>
                  <BoxLeft $gap={9}><Check><CheckMark /></Check><span>On</span></BoxLeft>
                </ValueBox>
              </PropRow>
              <PropRow $h={31} $mt={2}>
                <PropLabel $sel>Tile Set<Icon n="reset" s={16} c="#fff" /></PropLabel>
                <ValueBox>
                  <BoxLeft $gap={14}><Icon n="tileset" s={16} /><span>TileSet</span></BoxLeft>
                  <Icon n="arrowDown" s={12} c="#9a9a9a" />
                </ValueBox>
              </PropRow>
              <Nested>
                <PropRow $col={123}>
                  <PropLabel $pl={8}>Tile Shape</PropLabel>
                  <ValueBox><span>Square</span><Icon n="arrowDown" s={14} /></ValueBox>
                </PropRow>
                <PropRow $col={123}>
                  <PropLabel $pl={8} $dim>Tile Layout</PropLabel>
                  <ValueBox $dim><span>Stacked</span><Icon n="arrowDown" s={14} c="#666" /></ValueBox>
                </PropRow>
                <PropRow $col={123}>
                  <PropLabel $pl={8} $dim>Tile Offset Axis</PropLabel>
                  <ValueBox $dim><span>Horizontal Of</span><Icon n="arrowDown" s={14} c="#666" /></ValueBox>
                </PropRow>
                <PropRow $col={123} $h={62}>
                  <PropLabel $pl={8} $hl>Tile Size<Icon n="reset" s={16} c="#e8e8e8" /></PropLabel>
                  <VecBox>
                    <VecLine><Axis $c="#7a4444">x</Axis>3<Unit>px</Unit><Icon n="updown" s={14} /></VecLine>
                    <VecLine><Axis $c="#76883d">y</Axis>3<Unit>px</Unit><Icon n="updown" s={14} /></VecLine>
                  </VecBox>
                </PropRow>
                <SectionRows $mt={-1}>
                  {['Rendering', 'Physics Layers', 'Terrain Sets', 'Navigation Layers', 'Custom Data Layers'].map(t => (
                    <Arrowed key={t}>{t}</Arrowed>
                  ))}
                  <Arrowed>Resource<SectionNote>(1 change)</SectionNote></Arrowed>
                </SectionRows>
              </Nested>
              <SectionRows $mt={3}>
                <Arrowed>Rendering</Arrowed>
                <Arrowed>Physics</Arrowed>
                <Arrowed>
                  Navigation
                  <InlineOn><Check><CheckMark /></Check>On</InlineOn>
                </Arrowed>
              </SectionRows>
              <SectionHead $m="2px 0 3px"><Icon n="node" s={14} c="#6d92e8" />Node2D</SectionHead>
              <Arrowed>Transform</Arrowed>
              <SectionHead><Icon n="brushGray" s={16} c="#7c7c7c" />CanvasItem</SectionHead>
              {['Visibility', 'Ordering', 'Texture', 'Material'].map(t => (
                <Arrowed key={t}>{t}</Arrowed>
              ))}
              <SectionHead><Icon n="node" s={14} c="#cfcfcf" />Node</SectionHead>
              {['Process', 'Physics Interpolation', 'Auto Translate', 'Editor Description'].map(t => (
                <Arrowed key={t}>{t}</Arrowed>
              ))}
              <ScriptRow>
                <PropLabel $pl={8}>Script</PropLabel>
                <ValueBox>
                  <span>&lt;empty</span>
                  <BoxLeft $gap={12}><Icon n="folderScript" s={16} /><Icon n="arrowDown" s={12} c="#9a9a9a" /></BoxLeft>
                </ValueBox>
              </ScriptRow>
            </InspectorBody>
            <InspectorScroll />
          </DockBody>
        </Dock>
      </Column>
    </Main>

    <Dialog>
      <DialogTitle>
        Warning!
        <DialogClose><Icon n="close" s={10} c="#fff" /></DialogClose>
      </DialogTitle>
      <DialogText>No scene selected for painting. Use the Scene Picker from the toolbar to choose a scene before painting.</DialogText>
      <DialogBtns>
        <DialogBtn $w={104} $focus>OK</DialogBtn>
        <DialogBtn $w={105}>Copy Text</DialogBtn>
      </DialogBtns>
    </Dialog>
  </Page>
)

export default App
